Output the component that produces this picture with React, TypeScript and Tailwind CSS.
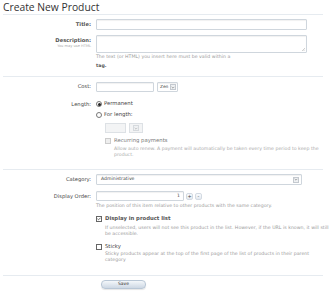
import { Check } from "lucide-react"

const label = "w-[96px] shrink-0 pr-[5px] text-right text-[5.2px] text-[#444]"
const hint = "text-[4.7px] leading-[6px] text-[#9a9a9a] whitespace-nowrap"
const box = "border border-[#cfd6dd] bg-white rounded-[1px] shadow-[inset_0_1px_1px_rgba(0,0,0,0.06)]"

function Arrow({ disabled }: { disabled?: boolean }) {
  return (
    <span className={`flex h-[6px] w-[6px] items-center justify-center border border-[#c4c9cf] bg-[#eef0f2] ${disabled ? "opacity-60" : ""}`}>
      <svg viewBox="0 0 6 4" className="h-[3px] w-[4px]">
        <path d="M1 1 L3 3 L5 1" fill="none" stroke="#666" strokeWidth="0.8" />
      </svg>
    </span>
  )
}

function Radio({ on }: { on?: boolean }) {
  return (
    <span className="flex h-[6px] w-[6px] items-center justify-center rounded-full border border-[#777] bg-white">
      {on && <span className="h-[3px] w-[3px] rounded-full bg-[#222]" />}
    </span>
  )
}

function Box({ on, disabled }: { on?: boolean; disabled?: boolean }) {
  return (
    <span className={`flex h-[6px] w-[6px] items-center justify-center border ${disabled ? "border-[#ccc] bg-[#eee]" : "border-[#666] bg-white"}`}>
      {on && <Check className="h-[6px] w-[6px] text-[#222]" strokeWidth={4} />}
    </span>
  )
}

export default function App() {
  return (
    <div className="h-[300px] w-[332px] bg-white pl-[3px] pr-[9px] font-['DejaVu_Sans',sans-serif] text-[#444]">
      <h1 className="h-[15px] border-b border-[#e6ebf0] pt-[1px] font-['Open_Sans',sans-serif] text-[10.3px] leading-[12px] text-[#333]">
        Create New Product
      </h1>

      <div className="ml-[-3px] mt-[4px] flex items-center">
        <div className={`${label} font-bold text-[#555]`}>Title:</div>
        <div className={`${box} h-[11px] w-[211px]`} />
      </div>

      <div className="ml-[-3px] mt-[5px] flex">
        <div className={label}>
          <div className="mt-[2px] font-bold leading-[7px] text-[#555]">Description:</div>
          <div className="text-[3.6px] leading-[5px] text-[#aaa]">You may use HTML</div>
        </div>
        <div>
          <div className={`${box} relative h-[18px] w-[211px]`}>
            <svg viewBox="0 0 4 4" className="absolute bottom-[1px] right-[1px] h-[3px] w-[3px]">
              <path d="M4 0 L0 4 M4 2 L2 4" stroke="#999" strokeWidth="0.6" />
            </svg>
          </div>
          <div className={`${hint} mt-[1px]`}>The text (or HTML) you insert here must be valid within a</div>
          <div className={`${hint} mt-[3px] font-bold text-[#555]`}>tag.</div>
        </div>
      </div>

      <div className="mt-[7px] border-b border-[#e6ebf0]" />

      <div className="ml-[-3px] mt-[5px] flex items-center">
        <div className={label}>Cost:</div>
        <div className={`${box} h-[10px] w-[58px]`} />
        <div className={`${box} ml-[3px] flex h-[10px] w-[21px] items-center justify-between pl-[2px] pr-[1px] text-[4.3px]`}>
          <span>Zen</span>
          <Arrow />
        </div>
      </div>

      <div className="ml-[-3px] mt-[8px] flex">
        <div className={`${label} leading-[8px]`}>Length:</div>
        <div className="flex flex-col text-[5.3px]">
          <div className="flex h-[8px] items-center gap-[2px]">
            <Radio on />
            <span>Permanent</span>
          </div>
          <div className="mt-[3px] flex h-[8px] items-center gap-[2px]">
            <Radio />
            <span>For length:</span>
          </div>
          <div className="ml-[9px] mt-[4px] flex items-center gap-[3px]">
            <div className="h-[10px] w-[21px] border border-[#dde1e5] bg-[#f3f4f5]" />
            <div className="flex h-[10px] w-[14px] items-center justify-center border border-[#dde1e5] bg-[#f3f4f5]">
              <Arrow disabled />
            </div>
          </div>
          <div className="ml-[9px] mt-[4px] flex h-[8px] items-center gap-[3px] text-[#777]">
            <Box disabled />
            <span>Recurring payments</span>
          </div>
          <div className={`${hint} ml-[18px] mt-[1px] text-[#aaa]`}>
            Allow auto renew. A payment will automatically be taken every time period to keep the
            <br />
            product.
          </div>
        </div>
      </div>

      <div className="mt-[11px] border-b border-[#e6ebf0]" />

      <div className="ml-[-3px] mt-[4px] flex items-center">
        <div className={label}>Category:</div>
        <div className={`${box} flex h-[11px] w-[206px] items-center justify-between pl-[4px] pr-[2px] text-[4.6px]`}>
          <span>Administrative</span>
          <Arrow />
        </div>
      </div>

      <div className="ml-[-3px] mt-[6px] flex">
        <div className={`${label} leading-[10px]`}>Display Order:</div>
        <div>
          <div className="flex items-center">
            <div className={`${box} flex h-[10px] w-[88px] items-center justify-end pr-[3px] text-[4.6px]`}>1</div>
            <span className="ml-[2px] flex h-[7px] w-[7px] items-center justify-center rounded-[2px] border border-[#d3dae2] bg-gradient-to-b from-[#fafcfe] to-[#e3e9f0] text-[5px] leading-none">+</span>
            <span className="ml-[2px] flex h-[7px] w-[7px] items-center justify-center rounded-[2px] border border-[#d3dae2] bg-gradient-to-b from-[#fafcfe] to-[#e3e9f0] text-[5px] leading-none">-</span>
          </div>
          <div className={`${hint} mt-[2px]`}>The position of this item relative to other products with the same category.</div>

          <div className="mt-[6px] flex h-[8px] items-center gap-[3px] text-[5.3px]">
            <Box on />
            <span className="font-bold text-[#555]">Display in product list</span>
          </div>
          <div className={`${hint} ml-[9px] mt-[2px] leading-[6.5px]`}>
            If unselected, users will not see this product in the list. However, if the URL is known, it will still
            <br />
            be accessible.
          </div>

          <div className="mt-[5.5px] flex h-[8px] items-center gap-[3px] text-[5.3px]">
            <Box />
            <span>Sticky</span>
          </div>
          <div className={`${hint} ml-[9px]`}>
            Sticky products appear at the top of the first page of the list of products in their parent
            <br />
            category
          </div>
        </div>
      </div>

      <div className="mt-[12.5px] border-b border-[#e6ebf0]" />

      <div className="ml-[98px] mt-[3.5px]">
        <button className="flex h-[9px] w-[45px] items-center justify-center rounded-[4px] border border-[#b9c7d6] bg-gradient-to-b from-[#f4f7fa] to-[#cdd8e4] text-[4.5px] text-[#333] shadow-[0_1px_1px_rgba(0,0,0,0.1)]">
          Save
        </button>
      </div>
    </div>
  )
}
